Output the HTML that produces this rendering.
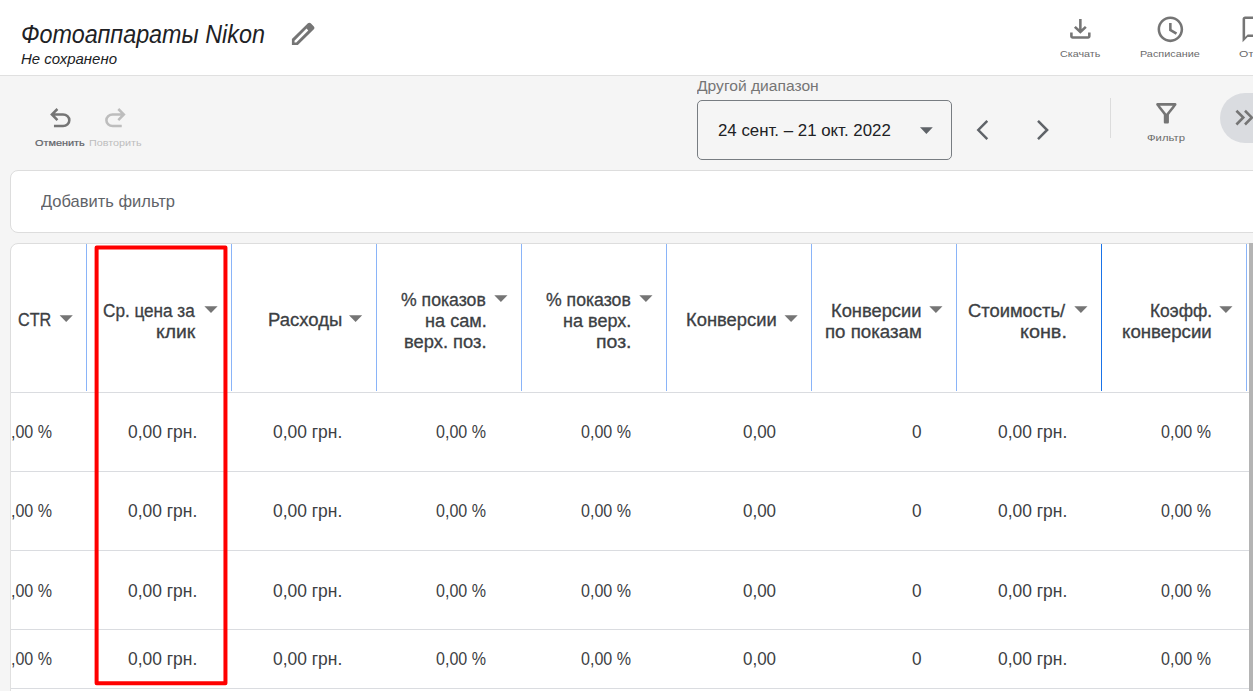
<!DOCTYPE html>
<html lang="ru"><head><meta charset="utf-8"><title>Фотоаппараты Nikon</title>
<style>
html,body{margin:0;padding:0}
body{width:1253px;height:691px;overflow:hidden;background:#f5f5f5;position:relative;font-family:'Liberation Sans',sans-serif}
body>div,body>svg{position:absolute;box-sizing:content-box}
.t{white-space:pre;line-height:30px}
.i{display:block;overflow:visible}
</style></head>
<body>
<div style="left:0;top:0;width:1253px;height:75px;background:#fff;border-bottom:1px solid #e0e0e0"></div>
<svg class="i" style="left:0;top:0" width="1253" height="691"><path fill="#757575" fill-rule="evenodd" d="M291.9 45V39.06L307.92 23.34Q309.33 21.93 310.74 23.34L313.86 26.46Q315.27 27.87 313.86 29.28L297.84 45zM294.5 42.4H296.27L308.28 30.38 306.52 28.62 294.5 40.63z"/></svg>
<svg class="i" style="left:1065.18px;top:14.03px" width="30.72" height="29.80" viewBox="0 0 24 24" preserveAspectRatio="none"><path fill="#757575" d="M18 15v3H6v-3H4v3c0 1.1.9 2 2 2h12c1.100 0 2-.9 2-2v-3h-2zm-1-4l-1.41-1.41L13 12.17V4h-2v8.17L8.410 9.590 7 11l5 5 5-5z"/></svg>
<svg class="i" style="left:1154.74px;top:13.84px" width="30.72" height="30.72" viewBox="0 0 24 24"><path fill="#757575" d="M11.99 2C6.47 2 2 6.48 2 12s4.470 10 9.990 10C17.520 22 22 17.520 22 12S17.520 2 11.990 2zM12 20c-4.420 0-8-3.580-8-8s3.580-8 8-8 8 3.580 8 8-3.580 8-8 8zM13 7H11V13.100L16.280 16.270 17.300 14.550 13 12z" /></svg>
<svg class="i" style="left:1240.24px;top:13.74px" width="30.72" height="30.72" viewBox="0 0 24 24"><path fill="#757575" d="M20 2H4c-1.100 0-2 .900-2 2v18l4-4h14c1.100 0 2-.900 2-2V4c0-1.100-.900-2-2-2zm0 14H6l-2 2V4h16v12z" /></svg>
<svg class="i" style="left:44.78px;top:102.58px" width="30.72" height="30.72" viewBox="0 0 24 24"><path fill="#757575" d="M7 19v-2h7.100q1.575 0 2.738-1T18 13.500q0-1.500-1.163-2.500T14.100 10H7.800l2.600 2.600L9 14 4 9l5-5 1.400 1.400L7.800 8h6.300q2.425 0 4.163 1.575T20 13.500q0 2.350-1.738 3.925T14.100 19H7Z" /></svg>
<svg class="i" style="left:99.98px;top:102.58px" width="30.72" height="30.72" viewBox="0 0 24 24"><path fill="#bdbdbd" transform="translate(24,0) scale(-1,1)" d="M7 19v-2h7.100q1.575 0 2.738-1T18 13.500q0-1.500-1.163-2.500T14.100 10H7.800l2.600 2.600L9 14 4 9l5-5 1.400 1.400L7.800 8h6.300q2.425 0 4.163 1.575T20 13.500q0 2.350-1.738 3.925T14.100 19H7Z"/></svg>
<div style="left:697px;top:100px;width:253px;height:58px;border:1px solid #787d82;border-radius:5px;background:#f5f5f5"></div>
<svg class="i" style="left:0;top:0" width="1253" height="691"><path fill="none" stroke="#5f6368" stroke-width="2.5" d="M987.3 120.8 978.3 130 987.3 139.2M1038 120.8 1047.1 130 1038 139.2"/></svg>
<div style="left:1110px;top:98px;width:1px;height:40px;background:#dcdcdc"></div>
<svg class="i" style="left:1151.18px;top:97.68px" width="30.72" height="30.72" viewBox="0 0 24 24"><path fill="#757575" d="M7 6h10l-5.010 6.300L7 6zm-2.750-.390C6.270 8.200 10 13 10 13v6c0 .550.450 1 1 1h2c.550 0 1-.450 1-1v-6s3.720-4.800 5.740-7.390c.510-.660.040-1.610-.790-1.610H5.040c-.830 0-1.300.950-.790 1.610z" /></svg>
<div style="left:1220px;top:93px;width:80px;height:50px;border-radius:25px;background:#dadce0"></div>
<svg class="i" style="left:1228.90px;top:102.30px" width="31.20" height="31.20" viewBox="0 0 24 24"><path fill="#757575" d="M6.410 6 5 7.410 9.580 12 5 16.590 6.410 18l6-6z M13 6l-1.410 1.410L16.170 12l-4.580 4.590L13 18l6-6z" /></svg>
<div style="left:10px;top:170px;width:1300px;height:61px;border:1px solid #dddddd;border-radius:8px;background:#fff"></div>
<div style="left:10px;top:243px;width:1300px;height:500px;border:1px solid #dddddd;border-radius:8px 0 0 0;background:#fff"></div>
<div style="left:11px;top:392px;width:1242px;height:1px;background:#dadce0"></div>
<div style="left:11px;top:471px;width:1242px;height:1px;background:#dadce0"></div>
<div style="left:11px;top:550px;width:1242px;height:1px;background:#dadce0"></div>
<div style="left:11px;top:629px;width:1242px;height:1px;background:#dadce0"></div>
<div style="left:11px;top:688px;width:1242px;height:1px;background:#dadce0"></div>
<div style="left:86px;top:244px;width:1px;height:147px;background:#8ab4f8"></div>
<div style="left:231px;top:244px;width:1px;height:147px;background:#8ab4f8"></div>
<div style="left:376px;top:244px;width:1px;height:147px;background:#8ab4f8"></div>
<div style="left:521px;top:244px;width:1px;height:147px;background:#8ab4f8"></div>
<div style="left:666px;top:244px;width:1px;height:147px;background:#8ab4f8"></div>
<div style="left:811px;top:244px;width:1px;height:147px;background:#8ab4f8"></div>
<div style="left:956px;top:244px;width:1px;height:147px;background:#8ab4f8"></div>
<div style="left:1101px;top:244px;width:1px;height:147px;background:#1a73e8"></div>
<div style="left:1246px;top:244px;width:1px;height:147px;background:#8ab4f8"></div>
<div style="left:1249px;top:243px;width:4px;height:448px;background:#b4b4b4"></div>
<svg class="i" style="left:0;top:0" width="1253" height="691"><path fill="#5f6368" d="M920 127.3H932.8L926.4 134.0z"/><path fill="#757575" d="M59.6 315.3H72.8L66.2 322.0z"/><path fill="#757575" d="M204.4 306.2H217.6L211.0 312.9z"/><path fill="#757575" d="M349.0 315.3H362.2L355.6 322.0z"/><path fill="#757575" d="M494.3 295.2H507.5L500.9 301.9z"/><path fill="#757575" d="M639.3 295.2H652.5L645.9 301.9z"/><path fill="#757575" d="M784.5 315.3H797.7L791.1 322.0z"/><path fill="#757575" d="M929.3 306.2H942.5L935.9 312.9z"/><path fill="#757575" d="M1074.3 306.2H1087.5L1080.9 312.9z"/><path fill="#757575" d="M1219.3 306.2H1232.5L1225.9 312.9z"/></svg>
<div class="t" style="left:20.87px;top:19px;font-size:26.2px;color:#202124;font-style:italic;transform:scaleX(0.8917);transform-origin:0 0;">Фотоаппараты Nikon</div>
<div class="t" style="left:21.11px;top:44px;font-size:15.3px;color:#202124;font-style:italic;transform:scaleX(0.9778);transform-origin:0 0;">Не сохранено</div>
<div class="t" style="left:1060.04px;top:39px;font-size:9.6px;color:#6b6b6b;transform:scaleX(1.1229);transform-origin:0 0;">Скачать</div>
<div class="t" style="left:1139.73px;top:39px;font-size:9.6px;color:#6b6b6b;transform:scaleX(1.1305);transform-origin:0 0;">Расписание</div>
<div class="t" style="left:1239.17px;top:39px;font-size:9.6px;color:#6b6b6b;transform:scaleX(1.2533);transform-origin:0 0;">Отзыв</div>
<div class="t" style="left:34.55px;top:128px;font-size:9.2px;color:#5f6368;-webkit-text-stroke:0.2px #5f6368;transform:scaleX(1.1860);transform-origin:0 0;">Отменить</div>
<div class="t" style="left:88.82px;top:128px;font-size:9.2px;color:#bdbdbd;transform:scaleX(1.1748);transform-origin:0 0;">Повторить</div>
<div class="t" style="left:697.39px;top:71px;font-size:15.4px;color:#757575;transform:scaleX(1.0140);transform-origin:0 0;">Другой диапазон</div>
<div class="t" style="left:718.40px;top:116px;font-size:16.8px;color:#202124;transform:scaleX(1.0039);transform-origin:0 0;">24 сент. – 21 окт. 2022</div>
<div class="t" style="left:1147.15px;top:123px;font-size:9.6px;color:#6b6b6b;transform:scaleX(1.1776);transform-origin:0 0;">Фильтр</div>
<div class="t" style="left:41.47px;top:186px;font-size:16.1px;color:#5f6368;transform:scaleX(1.0257);transform-origin:0 0;">Добавить фильтр</div>
<div class="t" style="left:18.14px;top:305px;font-size:17.6px;color:#3c4043;-webkit-text-stroke:0.3px #3c4043;transform:scaleX(0.9198);transform-origin:0 0;">CTR</div>
<div class="t" style="left:103.30px;top:296px;font-size:17.6px;color:#3c4043;-webkit-text-stroke:0.3px #3c4043;transform:scaleX(0.9745);transform-origin:0 0;">Ср. цена за</div>
<div class="t" style="left:156.12px;top:317px;font-size:17.6px;color:#3c4043;-webkit-text-stroke:0.3px #3c4043;transform:scaleX(1.0990);transform-origin:0 0;">клик</div>
<div class="t" style="left:267.51px;top:305px;font-size:17.6px;color:#3c4043;-webkit-text-stroke:0.3px #3c4043;transform:scaleX(1.0506);transform-origin:0 0;">Расходы</div>
<div class="t" style="left:401.06px;top:285px;font-size:17.6px;color:#3c4043;-webkit-text-stroke:0.3px #3c4043;transform:scaleX(1.0034);transform-origin:0 0;">% показов</div>
<div class="t" style="left:425.18px;top:306px;font-size:17.6px;color:#3c4043;-webkit-text-stroke:0.3px #3c4043;transform:scaleX(1.0302);transform-origin:0 0;">на сам.</div>
<div class="t" style="left:404.47px;top:327px;font-size:17.6px;color:#3c4043;-webkit-text-stroke:0.3px #3c4043;transform:scaleX(1.0422);transform-origin:0 0;">верх. поз.</div>
<div class="t" style="left:546.06px;top:285px;font-size:17.6px;color:#3c4043;-webkit-text-stroke:0.3px #3c4043;transform:scaleX(1.0034);transform-origin:0 0;">% показов</div>
<div class="t" style="left:563.49px;top:306px;font-size:17.6px;color:#3c4043;-webkit-text-stroke:0.3px #3c4043;transform:scaleX(1.0258);transform-origin:0 0;">на верх.</div>
<div class="t" style="left:596.49px;top:327px;font-size:17.6px;color:#3c4043;-webkit-text-stroke:0.3px #3c4043;transform:scaleX(1.1059);transform-origin:0 0;">поз.</div>
<div class="t" style="left:685.92px;top:305px;font-size:17.6px;color:#3c4043;-webkit-text-stroke:0.3px #3c4043;transform:scaleX(1.0442);transform-origin:0 0;">Конверсии</div>
<div class="t" style="left:831.22px;top:296px;font-size:17.6px;color:#3c4043;-webkit-text-stroke:0.3px #3c4043;transform:scaleX(1.0407);transform-origin:0 0;">Конверсии</div>
<div class="t" style="left:824.75px;top:317px;font-size:17.6px;color:#3c4043;-webkit-text-stroke:0.3px #3c4043;transform:scaleX(1.0613);transform-origin:0 0;">по показам</div>
<div class="t" style="left:968.25px;top:296px;font-size:17.6px;color:#3c4043;-webkit-text-stroke:0.3px #3c4043;transform:scaleX(1.0440);transform-origin:0 0;">Стоимость/</div>
<div class="t" style="left:1020.08px;top:317px;font-size:17.6px;color:#3c4043;-webkit-text-stroke:0.3px #3c4043;transform:scaleX(1.1261);transform-origin:0 0;">конв.</div>
<div class="t" style="left:1149.69px;top:296px;font-size:17.6px;color:#3c4043;-webkit-text-stroke:0.3px #3c4043;transform:scaleX(0.9879);transform-origin:0 0;">Коэфф.</div>
<div class="t" style="left:1121.76px;top:317px;font-size:17.6px;color:#3c4043;-webkit-text-stroke:0.3px #3c4043;transform:scaleX(1.0613);transform-origin:0 0;">конверсии</div>
<div class="t" style="left:1.75px;top:417px;font-size:17.6px;color:#3c4043;transform:scaleX(0.9120);transform-origin:0 0;">0,00 %</div>
<div class="t" style="left:127.79px;top:417px;font-size:17.6px;color:#3c4043;transform:scaleX(0.9901);transform-origin:0 0;">0,00 грн.</div>
<div class="t" style="left:272.79px;top:417px;font-size:17.6px;color:#3c4043;transform:scaleX(0.9901);transform-origin:0 0;">0,00 грн.</div>
<div class="t" style="left:436.35px;top:417px;font-size:17.6px;color:#3c4043;transform:scaleX(0.9120);transform-origin:0 0;">0,00 %</div>
<div class="t" style="left:581.35px;top:417px;font-size:17.6px;color:#3c4043;transform:scaleX(0.9120);transform-origin:0 0;">0,00 %</div>
<div class="t" style="left:743.41px;top:417px;font-size:17.6px;color:#3c4043;transform:scaleX(0.9657);transform-origin:0 0;">0,00</div>
<div class="t" style="left:911.90px;top:417px;font-size:17.6px;color:#3c4043;transform:scaleX(0.9762);transform-origin:0 0;">0</div>
<div class="t" style="left:997.79px;top:417px;font-size:17.6px;color:#3c4043;transform:scaleX(0.9901);transform-origin:0 0;">0,00 грн.</div>
<div class="t" style="left:1161.35px;top:417px;font-size:17.6px;color:#3c4043;transform:scaleX(0.9120);transform-origin:0 0;">0,00 %</div>
<div class="t" style="left:1.75px;top:496px;font-size:17.6px;color:#3c4043;transform:scaleX(0.9120);transform-origin:0 0;">0,00 %</div>
<div class="t" style="left:127.79px;top:496px;font-size:17.6px;color:#3c4043;transform:scaleX(0.9901);transform-origin:0 0;">0,00 грн.</div>
<div class="t" style="left:272.79px;top:496px;font-size:17.6px;color:#3c4043;transform:scaleX(0.9901);transform-origin:0 0;">0,00 грн.</div>
<div class="t" style="left:436.35px;top:496px;font-size:17.6px;color:#3c4043;transform:scaleX(0.9120);transform-origin:0 0;">0,00 %</div>
<div class="t" style="left:581.35px;top:496px;font-size:17.6px;color:#3c4043;transform:scaleX(0.9120);transform-origin:0 0;">0,00 %</div>
<div class="t" style="left:743.41px;top:496px;font-size:17.6px;color:#3c4043;transform:scaleX(0.9657);transform-origin:0 0;">0,00</div>
<div class="t" style="left:911.90px;top:496px;font-size:17.6px;color:#3c4043;transform:scaleX(0.9762);transform-origin:0 0;">0</div>
<div class="t" style="left:997.79px;top:496px;font-size:17.6px;color:#3c4043;transform:scaleX(0.9901);transform-origin:0 0;">0,00 грн.</div>
<div class="t" style="left:1161.35px;top:496px;font-size:17.6px;color:#3c4043;transform:scaleX(0.9120);transform-origin:0 0;">0,00 %</div>
<div class="t" style="left:1.75px;top:576px;font-size:17.6px;color:#3c4043;transform:scaleX(0.9120);transform-origin:0 0;">0,00 %</div>
<div class="t" style="left:127.79px;top:576px;font-size:17.6px;color:#3c4043;transform:scaleX(0.9901);transform-origin:0 0;">0,00 грн.</div>
<div class="t" style="left:272.79px;top:576px;font-size:17.6px;color:#3c4043;transform:scaleX(0.9901);transform-origin:0 0;">0,00 грн.</div>
<div class="t" style="left:436.35px;top:576px;font-size:17.6px;color:#3c4043;transform:scaleX(0.9120);transform-origin:0 0;">0,00 %</div>
<div class="t" style="left:581.35px;top:576px;font-size:17.6px;color:#3c4043;transform:scaleX(0.9120);transform-origin:0 0;">0,00 %</div>
<div class="t" style="left:743.41px;top:576px;font-size:17.6px;color:#3c4043;transform:scaleX(0.9657);transform-origin:0 0;">0,00</div>
<div class="t" style="left:911.90px;top:576px;font-size:17.6px;color:#3c4043;transform:scaleX(0.9762);transform-origin:0 0;">0</div>
<div class="t" style="left:997.79px;top:576px;font-size:17.6px;color:#3c4043;transform:scaleX(0.9901);transform-origin:0 0;">0,00 грн.</div>
<div class="t" style="left:1161.35px;top:576px;font-size:17.6px;color:#3c4043;transform:scaleX(0.9120);transform-origin:0 0;">0,00 %</div>
<div class="t" style="left:1.75px;top:644px;font-size:17.6px;color:#3c4043;transform:scaleX(0.9120);transform-origin:0 0;">0,00 %</div>
<div class="t" style="left:127.79px;top:644px;font-size:17.6px;color:#3c4043;transform:scaleX(0.9901);transform-origin:0 0;">0,00 грн.</div>
<div class="t" style="left:272.79px;top:644px;font-size:17.6px;color:#3c4043;transform:scaleX(0.9901);transform-origin:0 0;">0,00 грн.</div>
<div class="t" style="left:436.35px;top:644px;font-size:17.6px;color:#3c4043;transform:scaleX(0.9120);transform-origin:0 0;">0,00 %</div>
<div class="t" style="left:581.35px;top:644px;font-size:17.6px;color:#3c4043;transform:scaleX(0.9120);transform-origin:0 0;">0,00 %</div>
<div class="t" style="left:743.41px;top:644px;font-size:17.6px;color:#3c4043;transform:scaleX(0.9657);transform-origin:0 0;">0,00</div>
<div class="t" style="left:911.90px;top:644px;font-size:17.6px;color:#3c4043;transform:scaleX(0.9762);transform-origin:0 0;">0</div>
<div class="t" style="left:997.79px;top:644px;font-size:17.6px;color:#3c4043;transform:scaleX(0.9901);transform-origin:0 0;">0,00 грн.</div>
<div class="t" style="left:1161.35px;top:644px;font-size:17.6px;color:#3c4043;transform:scaleX(0.9120);transform-origin:0 0;">0,00 %</div>
<div style="left:0;top:392px;width:10px;height:299px;background:#f5f5f5"></div><div style="left:10px;top:392px;width:1px;height:299px;background:#e0e0e0"></div><svg class="i" style="left:0;top:0" width="1253" height="691"><rect x="96.6" y="247.6" width="128.85" height="435.7" fill="none" stroke="#ff0000" stroke-width="4" stroke-linejoin="round"/></svg>
</body></html>
